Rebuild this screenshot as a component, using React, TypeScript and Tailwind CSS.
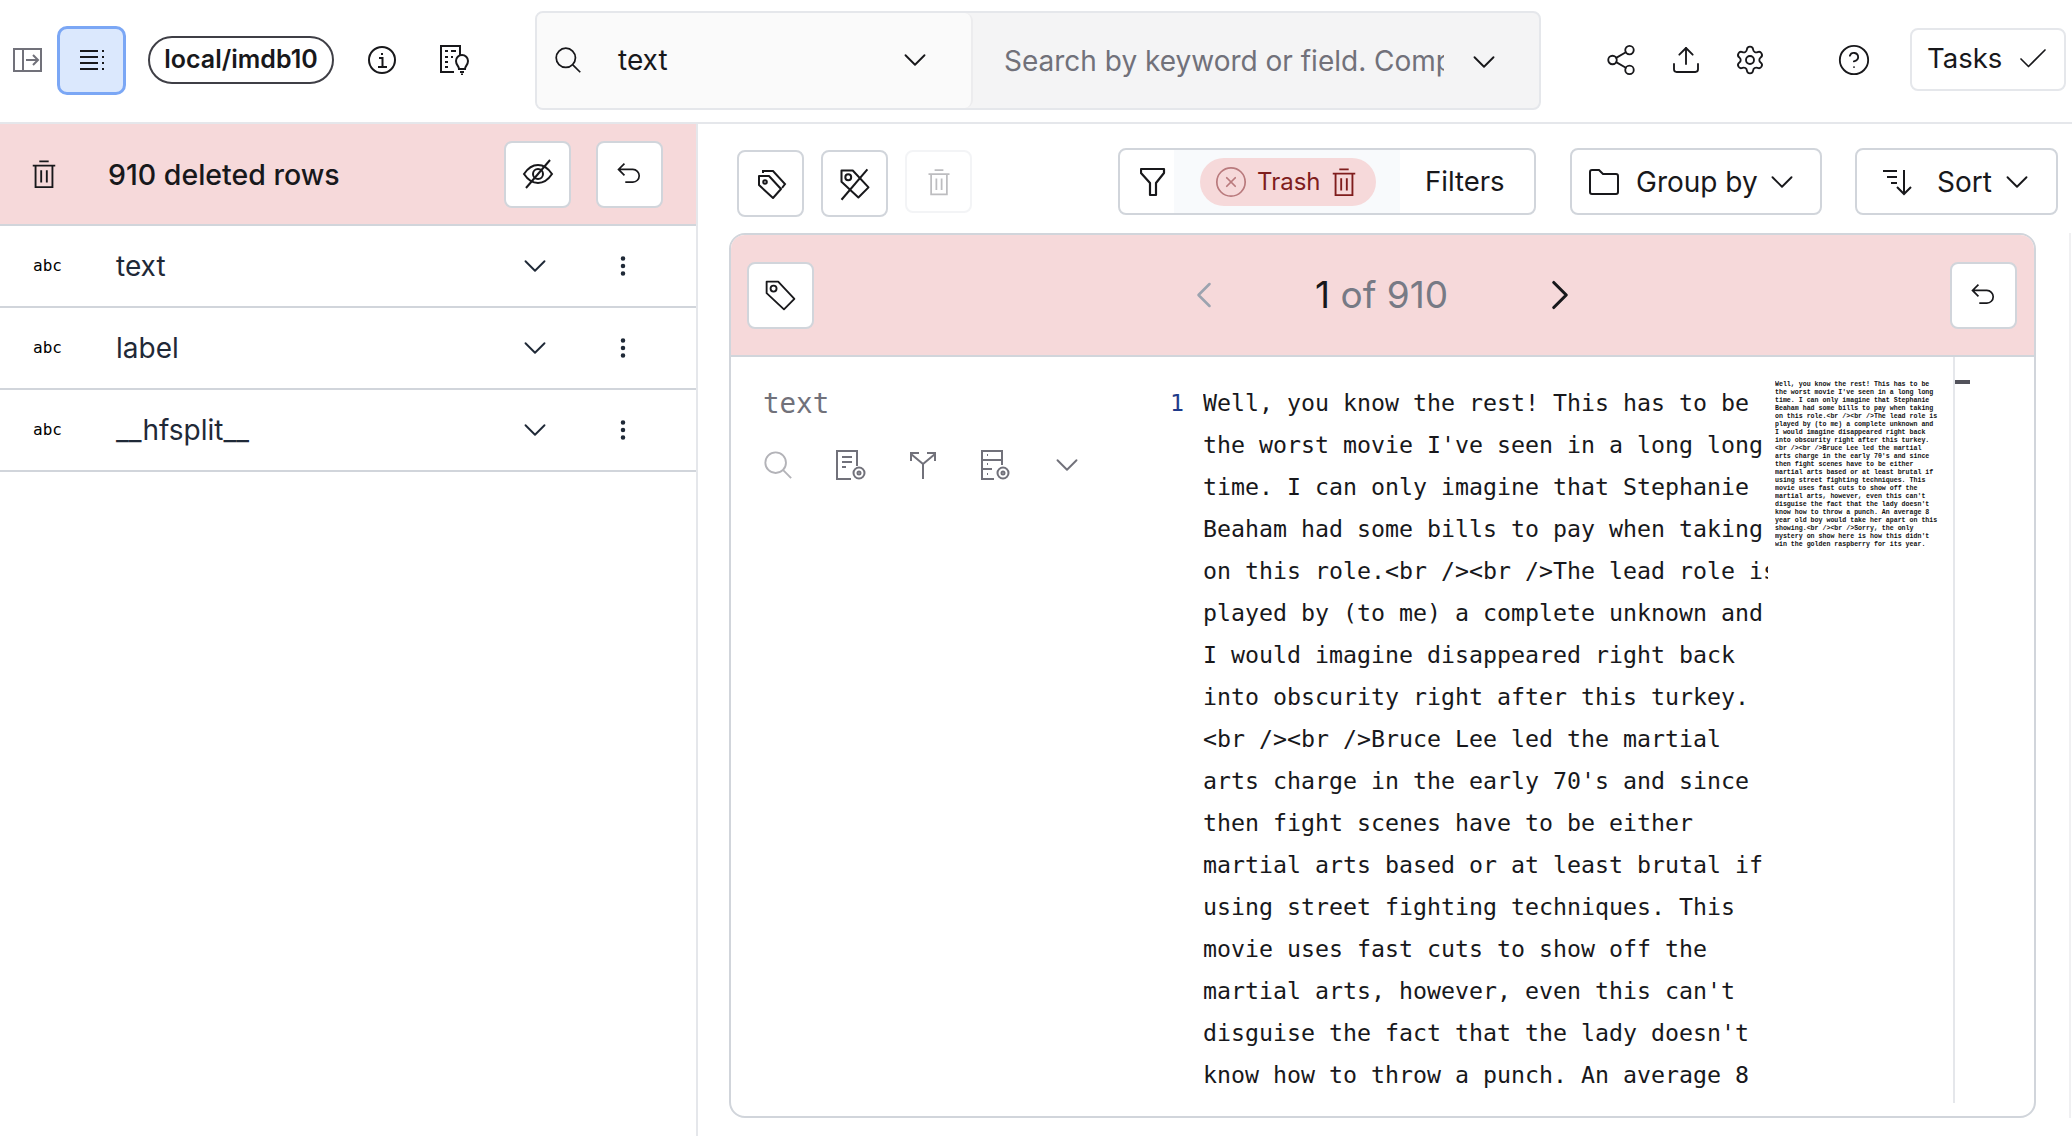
import { ReactNode } from 'react'
import { Check, ChevronDown, ChevronLeft, ChevronRight, CircleHelp, CircleX, EllipsisVertical, Settings, Share2, Upload } from 'lucide-react'

const sans = "font-['Inter','Noto_Sans',sans-serif]"
const mono = "font-['DejaVu_Sans_Mono','Liberation_Mono',monospace]"

const editorLines = [
  'Well, you know the rest! This has to be',
  "the worst movie I've seen in a long long",
  'time. I can only imagine that Stephanie',
  'Beaham had some bills to pay when taking',
  'on this role.<br /><br />The lead role is',
  'played by (to me) a complete unknown and',
  'I would imagine disappeared right back',
  'into obscurity right after this turkey.',
  '<br /><br />Bruce Lee led the martial',
  "arts charge in the early 70's and since",
  'then fight scenes have to be either',
  'martial arts based or at least brutal if',
  'using street fighting techniques. This',
  'movie uses fast cuts to show off the',
  "martial arts, however, even this can't",
  "disguise the fact that the lady doesn't",
  'know how to throw a punch. An average 8',
]

const minimapLines = [
  ...editorLines,
  'year old boy would take her apart on this',
  'showing.<br /><br />Sorry, the only',
  "mystery on show here is how this didn't",
  'win the golden raspberry for its year.',
]

function Icon({ size = 28, stroke = 2, className = '', children }: { size?: number; stroke?: number; className?: string; children: ReactNode }) {
  return (
    <svg width={size} height={size} viewBox="0 0 32 32" fill="none" stroke="currentColor" strokeWidth={stroke} className={`shrink-0 ${className}`}>
      {children}
    </svg>
  )
}

const TrashIcon = ({ size = 30, className = '' }: { size?: number; className?: string }) => (
  <Icon size={size} className={className}>
    <path d="M4 7h24M11 2.500h10M7 7v23h18V7M13 12v13M19 12v13" />
  </Icon>
)

const TagIcon = () => (
  <Icon size={37} stroke={1.6}>
    <path d="M4 4h10l14 15-9 9L4 14z" strokeLinejoin="round" />
    <circle cx="10" cy="10" r="2.600" />
  </Icon>
)

const SearchIcon = ({ size = 28 }: { size?: number }) => (
  <Icon size={size}>
    <circle cx="13.500" cy="13.500" r="11" />
    <path d="M21.500 21.500 30 30" />
  </Icon>
)

const UndoIcon = () => (
  <Icon size={27}>
    <path d="M10 3 3 10l7 7M3 10h17a7.500 7.500 0 0 1 0 15h-9" />
  </Icon>
)

const Chevron = ({ className = '' }: { className?: string }) => (
  <ChevronDown size={38} strokeWidth={1.2} className={`shrink-0 ${className}`} />
)

function WhiteButton({ children, className = '' }: { children: ReactNode; className?: string }) {
  return (
    <div className={`flex h-[67px] w-[67px] shrink-0 items-center justify-center rounded-lg border-2 border-[#d1d5db] bg-white ${className}`}>
      {children}
    </div>
  )
}

function FieldRow({ name }: { name: string }) {
  return (
    <div className="flex h-[82px] items-center border-b-2 border-[#d1d5db]">
      <span className={`ml-[33px] w-[83px] text-[16px] text-black ${mono}`}>abc</span>
      <span className="w-[400px] text-[28px] text-[#1f2937]">{name}</span>
      <Chevron className="text-[#1f2937]" />
      <EllipsisVertical size={26} strokeWidth={2.2} className="ml-[56px] text-[#1f2937]" />
    </div>
  )
}

export default function App() {
  return (
    <div className={`flex h-[1136px] w-[2072px] flex-col overflow-hidden bg-white text-[#18181b] ${sans}`}>
      {/* top bar */}
      <header className="flex h-[124px] shrink-0 items-center border-b-2 border-[#e5e7eb] pb-[2px]">
        <svg width="30" height="24" viewBox="0 0 30 24" fill="none" stroke="#71717a" strokeWidth="2" className="ml-[13px]">
          <rect x="1" y="1" width="27" height="22" />
          <path d="M10 1v22M13 12h11M20 7l5 5-5 5" />
        </svg>
        <div className="ml-[14px] flex h-[69px] w-[69px] items-center justify-center rounded-[10px] border-[3px] border-[#7ba7f5] bg-[#dbe8fd]">
          <svg width="26" height="26" viewBox="0 0 26 26" fill="none" stroke="#18181b" strokeWidth="2">
            <path d="M1 4h18M1 10h18M1 16h18M1 22h18" />
            <path d="M23 4h2M23 10h2M23 16h2M23 22h2" />
          </svg>
        </div>
        <div className="ml-[22px] flex h-[48px] w-[186px] items-center justify-center rounded-full border-2 border-[#3f3f46] text-[25px] font-semibold">local/imdb10</div>
        <svg width="28" height="30" viewBox="0 0 28 30" fill="none" stroke="#18181b" strokeWidth="2" className="ml-[34px]">
          <circle cx="14" cy="15" r="13" />
          <path d="M11 13h3.500v9M10 22h9M14 8v2" />
        </svg>
        <svg width="30" height="30" viewBox="0 0 30 30" fill="none" stroke="#18181b" strokeWidth="2" className="ml-[44px]">
          <path d="M14 27H1V1h19v9" />
          <path d="M5 6h3M11 6h5M5 12h3M11 12h2M5 17h3M5 22h3" />
          <path d="M19 24c0-3-3-4-3-8a6 6 0 0 1 12 0c0 4-3 5-3 8zM20 27h4M21 29.500h2" />
        </svg>

        {/* search */}
        <div className="ml-[65px] flex h-[99px] w-[1006px] shrink-0 overflow-hidden rounded-lg border-2 border-[#e5e7eb] bg-[#f4f4f5]">
          <div className="flex w-[436px] shrink-0 items-center rounded-r-lg border-r-2 border-[#ececee] bg-[#fafafa]">
            <div className="ml-[17px]"><SearchIcon /></div>
            <span className="ml-[36px] w-[278px] text-[28px]">text</span>
            <Chevron />
          </div>
          <span className="ml-[31px] w-[440px] overflow-hidden whitespace-pre pt-[27px] text-[28px] text-[#71717a]">Search by keyword or field. Comp</span>
          <Chevron className="ml-[21px] mt-[30px]" />
        </div>

        <Share2 size={34} strokeWidth={1.3} className="ml-[63px]" />
        <Upload size={32} strokeWidth={1.4} className="ml-[32px]" />
        <Settings size={32} strokeWidth={1.4} className="ml-[32px]" />
        <CircleHelp size={34} strokeWidth={1.3} className="ml-[71px]" />
        <div className="mb-[2px] ml-[39px] flex h-[63px] w-[156px] shrink-0 items-center rounded-lg border-2 border-[#e5e7eb] pl-[15px] text-[27.5px]">
          Tasks
          <Check size={36} strokeWidth={1.1} className="ml-[13px] shrink-0" />
        </div>
      </header>

      <div className="flex min-h-0 flex-1">
        {/* fields panel */}
        <aside className="w-[698px] shrink-0 border-r-2 border-[#e5e7eb]">
          <div className="flex h-[102px] items-center border-b-2 border-[#d1d5db] bg-[#f6d9da]">
            <TrashIcon className="ml-[29px]" />
            <span className="ml-[49px] w-[396px] pt-[2px] text-[28.5px] font-medium">910 deleted rows</span>
            <WhiteButton>
              <svg width="32" height="32" viewBox="0 0 32 32" fill="none" stroke="currentColor" strokeWidth="2">
                <path d="M2 16c4-6 8-9 14-9s10 3 14 9c-4 6-8 9-14 9S6 22 2 16z" />
                <circle cx="16" cy="16" r="5" />
                <path d="M28 2 4 30" />
              </svg>
            </WhiteButton>
            <WhiteButton className="ml-[25px]"><UndoIcon /></WhiteButton>
          </div>
          <FieldRow name="text" />
          <FieldRow name="label" />
          <FieldRow name="__hfsplit__" />
        </aside>

        {/* dataset view */}
        <main className="flex min-w-0 flex-1 flex-col">
          <div className="flex h-[109px] shrink-0 items-start pt-[24px]">
            <WhiteButton className="ml-[39px] mt-[2px]">
              <svg width="32" height="32" viewBox="0 0 32 32" fill="none" stroke="currentColor" strokeWidth="2">
                <path d="M4 8h10l12 13-8 9L4 17z" strokeLinejoin="round" />
                <circle cx="10" cy="14" r="1.800" />
                <path d="M8 5V3h10l12 13-3 4" />
              </svg>
            </WhiteButton>
            <WhiteButton className="ml-[17px] mt-[2px]">
              <svg width="36" height="36" viewBox="0 0 32 32" fill="none" stroke="currentColor" strokeWidth="1.800">
                <path d="M4 4h10l14 15-9 9L4 14z" strokeLinejoin="round" />
                <circle cx="10" cy="10" r="2.600" />
                <path d="M27 3 4 30" />
              </svg>
            </WhiteButton>
            <div className="ml-[17px] mt-[2px] flex h-[63px] w-[67px] items-center justify-center rounded-lg border-2 border-[#f3f4f6] text-[#bdbdc0]">
              <TrashIcon size={28} />
            </div>
            <div className="ml-[146px] flex h-[67px] w-[418px] shrink-0 items-center overflow-hidden rounded-lg border-2 border-[#d1d5db]">
              <svg width="26" height="30" viewBox="0 0 26 30" fill="none" stroke="currentColor" strokeWidth="2.200" className="ml-[20px]">
                <path d="M1 2h23v4l-8 10v12h-6V16L1 6z" strokeLinejoin="round" />
              </svg>
              <div className="ml-[8px] flex h-full w-[226px] items-center bg-[#f8fafc] pl-[26px]">
                <div className="flex h-[48px] w-[176px] shrink-0 items-center rounded-full bg-[#f6d9da] pl-[14px] text-[#7f1d1d]">
                  <CircleX size={34} strokeWidth={1.2} className="shrink-0 text-[#b97a7d]" />
                  <span className="ml-[9px] text-[24px]">Trash</span>
                  <TrashIcon size={30} className="ml-[8px]" />
                </div>
              </div>
              <span className="ml-[25px] text-[27.5px]">Filters</span>
            </div>
            <div className="ml-[34px] flex h-[67px] w-[252px] shrink-0 items-center rounded-lg border-2 border-[#d1d5db] pl-[17px] text-[28px]">
              <svg width="30" height="26" viewBox="0 0 30 26" fill="none" stroke="currentColor" strokeWidth="2" className="shrink-0">
                <path d="M1 3a2 2 0 0 1 2-2h7l4 4h13a2 2 0 0 1 2 2v16a2 2 0 0 1-2 2H3a2 2 0 0 1-2-2z" />
              </svg>
              <span className="ml-[17px]">Group by</span>
              <Chevron className="ml-[5px]" />
            </div>
            <div className="ml-[33px] flex h-[67px] w-[203px] shrink-0 items-center rounded-lg border-2 border-[#d1d5db] pl-[25px] text-[28px]">
              <svg width="30" height="28" viewBox="0 0 30 28" fill="none" stroke="currentColor" strokeWidth="2" className="shrink-0">
                <path d="M1 3h14M5 9h10M9 15h6M22 2v24M15 19l7 7 7-7" />
              </svg>
              <span className="ml-[25px]">Sort</span>
              <Chevron className="ml-[6px]" />
            </div>
          </div>

          <div className="flex">
            <section className="ml-[31px] flex h-[885px] w-[1307px] shrink-0 flex-col overflow-hidden rounded-2xl border-2 border-[#d1d5db]">
              <div className="flex h-[122px] shrink-0 items-center border-b-2 border-[#d1d5db] bg-[#f6d9da]">
                <WhiteButton className="ml-[16px]"><TagIcon /></WhiteButton>
                <ChevronLeft size={44} strokeWidth={1.4} className="ml-[368px] shrink-0 text-[#9ca3af]" />
                <div className="ml-[89px] w-[149px] shrink-0 text-[37px]">1 <span className="text-[#777a85]">of 910</span></div>
                <ChevronRight size={50} strokeWidth={1.5} className="ml-[71px] shrink-0" />
                <WhiteButton className="ml-[365px]"><UndoIcon /></WhiteButton>
              </div>

              <div className="flex min-h-0 flex-1">
                <div className="w-[439px] shrink-0 pl-[32px] pt-[25px]">
                  <div className={`text-[27.5px] leading-[42px] text-[#71717a] ${mono}`}>text</div>
                  <div className="mt-[26px] flex h-[30px] items-center text-[#71717a]">
                    <div className="text-[#b3b3b8]"><SearchIcon size={30} /></div>
                    <svg width="30" height="30" viewBox="0 0 30 30" fill="none" stroke="currentColor" strokeWidth="2" className="ml-[43px]">
                      <path d="M15 29H1V1h20v15M6 7h10M6 12h10M6 17h4" />
                      <circle cx="23" cy="23" r="5.500" />
                      <circle cx="23" cy="23" r="1.500" />
                    </svg>
                    <svg width="28" height="28" viewBox="0 0 28 28" fill="none" stroke="currentColor" strokeWidth="2" className="ml-[43px]">
                      <path d="M14 28V13L2 3M14 13 26 3M2 10V2h8M26 10V2h-8" />
                    </svg>
                    <svg width="30" height="30" viewBox="0 0 30 30" fill="none" stroke="currentColor" strokeWidth="2" className="ml-[43px]">
                      <path d="M14 29H2V1h20v14M2 10h20M2 19h10M7 5h1M7 14h1M7 24h1" />
                      <circle cx="23" cy="23" r="5.500" />
                      <circle cx="23" cy="23" r="1.500" />
                    </svg>
                    <Chevron className="ml-[38px]" />
                  </div>
                </div>

                <div className="flex h-[746px] min-w-0 flex-1">
                  <div className={`w-[33px] shrink-0 pt-[25px] text-[23.25px] leading-[42px] text-[#1e3a8a] ${mono}`}>1</div>
                  <div className={`w-[565px] shrink-0 overflow-hidden whitespace-pre pt-[25px] text-[23.25px] leading-[42px] text-[#18181b] ${mono}`}>
                    {editorLines.map(line => <div key={line}>{line}</div>)}
                  </div>
                  <div className="ml-[7px] w-[178px] shrink-0 overflow-hidden whitespace-pre pt-[24px] font-['Liberation_Mono',monospace] text-[6.6px] font-bold leading-[8px] text-[#111111]">
                    {minimapLines.map(line => <div key={line}>{line}</div>)}
                  </div>
                  <div className="h-full w-[17px] shrink-0 border-l-2 border-[#e5e7eb] pt-[23px]">
                    <div className="h-[4px] w-[15px] bg-[#52525b]" />
                  </div>
                </div>
              </div>
            </section>
            <div className="ml-[33px] w-[2px] bg-[#f0f0f2]" />
          </div>
        </main>
      </div>
    </div>
  )
}
